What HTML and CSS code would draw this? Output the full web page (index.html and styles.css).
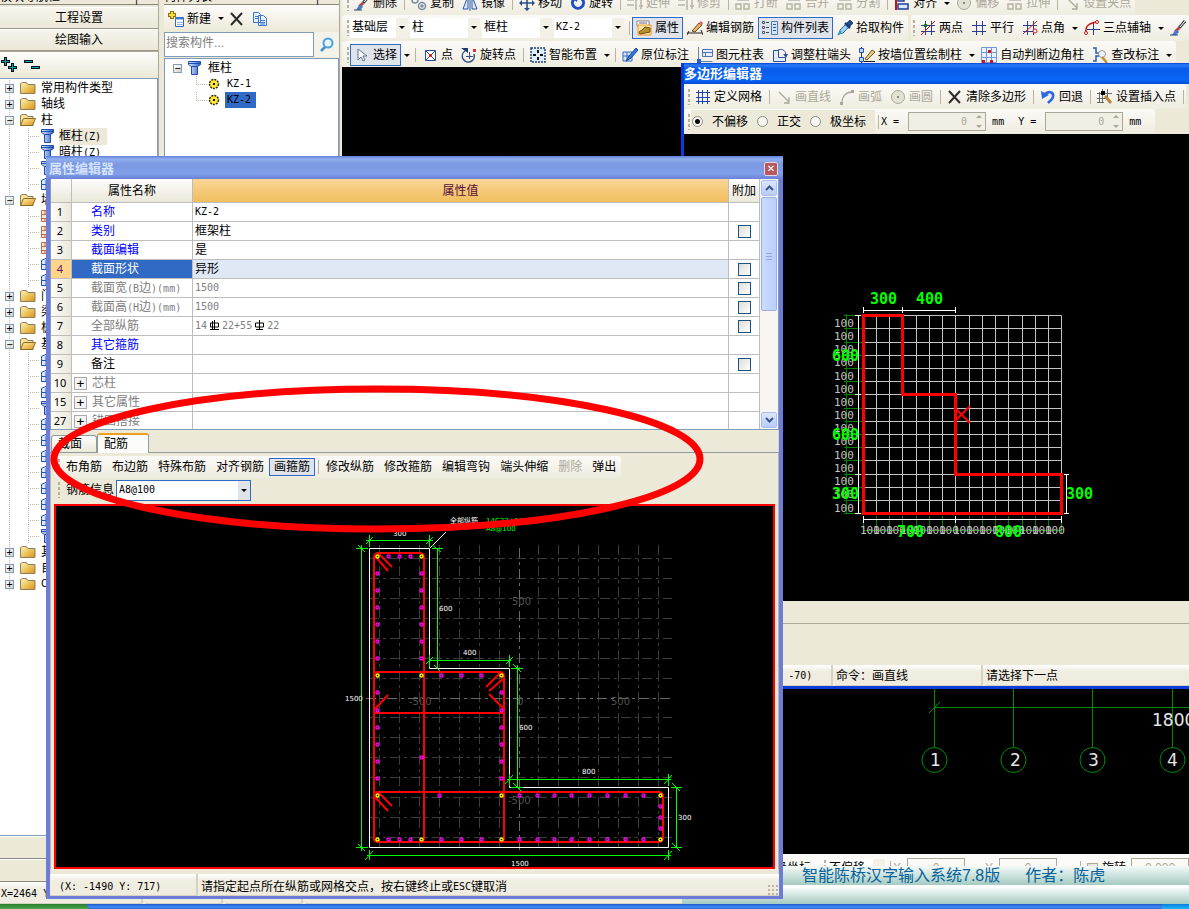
FILE: index.html
```
<!DOCTYPE html>
<html lang="zh-CN">
<head>
<meta charset="utf-8">
<title>属性编辑器</title>
<link rel="stylesheet" href="styles.css">
</head>
<body>
<svg class="defs" aria-hidden="true">
  <defs>
    <linearGradient id="gold" x1="0" y1="0" x2="1" y2="1"><stop offset="0" stop-color="#fff3b4"/><stop offset="1" stop-color="#dc9410"/></linearGradient>
    <linearGradient id="steel" x1="0" y1="0" x2="1" y2="0"><stop offset="0" stop-color="#e8f0ff"/><stop offset="1" stop-color="#2a5cc0"/></linearGradient>
    <marker id="bar" markerUnits="userSpaceOnUse" markerWidth="6" markerHeight="6" refX="2.500" refY="2.500"><circle cx="3" cy="3" r="1.500" fill="#000" stroke="#f0f" stroke-width="1.400"/></marker>
    <marker id="corner" markerUnits="userSpaceOnUse" markerWidth="6" markerHeight="6" refX="2.500" refY="2.500"><circle cx="3" cy="3" r="1.500" fill="#000" stroke="#ff0" stroke-width="1.400"/></marker>
  </defs>
  <symbol id="brush" viewBox="0 0 16 16"><path d="M15 1L9 8" stroke="#444" stroke-width="3"/><path d="M15 1L10 7" stroke="#fff"/><path d="M8 7l2 2-3 3-3-1z" fill="#c33"/><path d="M6 9l3 3-3 3H2z" fill="#4a78c8"/><path d="M0 15h8" stroke="#234a80"/></symbol>
  <symbol id="rings" viewBox="0 0 16 16"><g fill="none" stroke="#7b8ba5" stroke-width="1.5"><circle cx="4" cy="5" r="3"/><circle cx="11" cy="11" r="3.5"/><circle cx="11" cy="11" r="1"/></g></symbol>
  <symbol id="mirror" viewBox="0 0 16 16"><path d="M6 1v13H1zM10 1v13h5z" fill="#dfe9fb" stroke="#2b56a8"/><path d="M8 0v16" stroke="#2b56a8"/></symbol>
  <symbol id="move" viewBox="0 0 16 16"><path d="M8 2v12M2 8h12" stroke="#2b4f8c" stroke-width="1.6"/><path d="M8 0l3 3H5zM8 16l3-3H5zM0 8l3-3v6zM16 8l-3-3v6z" fill="#2b4f8c"/></symbol>
  <symbol id="turn" viewBox="0 0 16 16"><path d="M4 4a5.5 5.5 0 1 0 8 0" fill="none" stroke="#1d50c8" stroke-width="3"/><path d="M1 3l7-2-1 6z" fill="#1d50c8"/></symbol>
  <symbol id="dim" viewBox="0 0 16 16"><path d="M0 5h7M0 10h7M9 1v14M12 4h4M12 11h4M14 2v12" fill="none" stroke="#b9b5a4" stroke-width="1.5"/></symbol>
  <symbol id="dimbox" viewBox="0 0 16 16"><path d="M1 9h5v5H1zM9 9h5v5H9zM2 5h12" fill="none" stroke="#b9b5a4" stroke-width="1.5"/></symbol>
  <symbol id="align" viewBox="0 0 16 16"><path d="M2 0v15" stroke="#c11" stroke-width="2"/><path d="M4 2h6v4H4zM4 9h10v5H4z" fill="#dbe6ff" stroke="#1d3f98" stroke-width="1.5"/></symbol>
  <symbol id="prop" viewBox="0 0 16 16"><path d="M1 1h12v5H1z" fill="#fff" stroke="#888"/><path d="M3 3h8" stroke="#668"/><path d="M2 5h13v10H2z" fill="#ffe2a0" stroke="#ef9a2d"/><path d="M3 12l3-2 3-3 5 1v4l-5 1-5 1z" fill="#b99230" stroke="#6b4e0c"/></symbol>
  <symbol id="pencil" viewBox="0 0 16 16"><path d="M0 13h15M2 11l-2 4M14 10l2 5" stroke="#222" fill="none"/><path d="M5 11l7-8 3 2-7 7z" fill="#e2b667" stroke="#6d4c1b"/><path d="M12 3l2-2 2 2-1 2z" fill="#d66"/></symbol>
  <symbol id="list" viewBox="0 0 16 16"><path d="M.5 1.500h2v2h-2zM.5 6.500h2v2h-2zM.5 11.500h2v2h-2z" fill="#fff" stroke="#456"/><path d="M4 2.500h3M4 7.500h3M4 12.500h3" stroke="#345"/><path d="M9.500 1.500h6v13h-6z" fill="#d6e4fc" stroke="#5478b0"/><path d="M11 4.500h3M11 7.500h3M11 10.500h3" stroke="#2459b0"/></symbol>
  <symbol id="dropper" viewBox="0 0 16 16"><path d="M2 14l1-4 6-6 3 3-6 6z" fill="#9fd0f4" stroke="#2e72a8"/><path d="M8 3l5 5" stroke="#173f78" stroke-width="2.500"/><path d="M10 4l3-3 2 2-3 3z" fill="#2f78d0" stroke="#173f78" stroke-width="2"/><path d="M1 15l3-4" stroke="#2f9fd8" stroke-width="2"/></symbol>
  <symbol id="hash" viewBox="0 0 16 16"><path d="M5.500 1v14M11.500 1v14M1 5.500h14M1 11.500h14" stroke="#2c3d90"/></symbol>
  <symbol id="hashline" viewBox="0 0 16 16"><path d="M5.500 1v14M11.500 1v14M1 5.500h14M1 11.500h14" stroke="#2c3d90"/><path d="M1 15L15 1" stroke="#d01818"/><path d="M4 4h3v3H4z" fill="#197b19"/></symbol>
  <symbol id="hashangle" viewBox="0 0 16 16"><path d="M5.500 1v14M11.500 1v14M1 5.500h14M1 11.500h14" stroke="#2c3d90"/><path d="M1 14L15 1" stroke="#d01818"/><circle cx="13" cy="11" r="2" fill="#fff" stroke="#d01818"/></symbol>
  <symbol id="arc3" viewBox="0 0 16 16"><path d="M9.500 3v12M3 9.500h13" stroke="#2c3d90"/><path d="M2 13C1 6 5 3 13 2" fill="none" stroke="#d01818" stroke-width="1.5"/><circle cx="2" cy="13" r="1.500" fill="#fff" stroke="#d01818"/><circle cx="13" cy="2" r="1.500" fill="#fff" stroke="#d01818"/></symbol>
  <symbol id="cursor" viewBox="0 0 16 16"><path d="M4 2v11l3-3 2 4 2-1-2-4h4z" fill="#fff" stroke="#5a7496"/></symbol>
  <symbol id="point" viewBox="0 0 16 16"><path d="M3.500 3.500h10v10h-10z" fill="#fff" stroke="#2b4a9c"/><path d="M4 4l9 9M13 4l-9 9" stroke="#2b4a9c"/><path d="M7 7h3v3H7z" fill="#d22"/></symbol>
  <symbol id="rotpoint" viewBox="0 0 16 16"><path d="M4 4a6 6 0 1 0 9 3" fill="none" stroke="#344c86" stroke-width="1.5"/><path d="M0 1h7v5z" fill="#20386c"/><path d="M8.500 5v7M5 9.500h7" stroke="#344c86"/><path d="M12 2h3v3h-3z" fill="#d33"/></symbol>
  <symbol id="smart" viewBox="0 0 16 16"><path d="M1 1h14v14H1z" fill="#dcecfb" stroke="#23426e" stroke-width="1.5" stroke-dasharray="2 1"/><path d="M8 3v3M8 10v3M3 8h3M10 8h3" stroke="#111" stroke-width="2"/></symbol>
  <symbol id="note" viewBox="0 0 16 16"><path d="M1 5h9v9H1zM1 9h9M5 5v9" fill="#d7e4fb" stroke="#4068b8"/><path d="M4 14l3-5 7-8 2 2-7 8z" fill="#2f7be0" stroke="#174b9c"/></symbol>
  <symbol id="table" viewBox="0 0 16 16"><path d="M1.500 0v14.500h14" fill="none" stroke="#6e83a8"/><path d="M5.500 2.500h10v7h-10zM5 5.500h10M8.500 5v4" fill="#e7effd" stroke="#4d74b8"/><path d="M0 12h4v4H0z" fill="#285fc8"/></symbol>
  <symbol id="adjust" viewBox="0 0 16 16"><path d="M1.500 3.500h5v7h7v4h-12z" fill="#e4edff" stroke="#314d98"/><path d="M6 3c5-2 8 1 8 6" fill="none" stroke="#314d98"/><path d="M11 7h5l-2 4z" fill="#314d98"/></symbol>
  <symbol id="wallpos" viewBox="0 0 16 16"><path d="M2.500 0v16" stroke="#333"/><path d="M.5 1.500h4v4h-4zM.5 10.500h4v4h-4z" fill="#bcd5ff" stroke="#2355b8"/><path d="M5 14.500h11" stroke="#222"/><path d="M6 12l7-9 3 2-8 8z" fill="#e7cd83" stroke="#735521"/></symbol>
  <symbol id="autocol" viewBox="0 0 16 16"><path d="M.5.5h15v15H.5zM1 5.500h14M1 10.500h14M5.500 1v14M10.500 1v14" fill="#e9f2ff" stroke="#6f99d8"/><path d="M7 3h3v3H7zM1 13h3v3H1zM9 13h3v3H9z" fill="#d11"/></symbol>
  <symbol id="check" viewBox="0 0 16 16"><path d="M1 1h3v5h3v3H4v5H1" fill="none" stroke="#2660b8" stroke-width="1.5"/><circle cx="10" cy="7" r="3.5" fill="#eaf3ff" stroke="#999"/><path d="M10 10l5 6" stroke="#c19138" stroke-width="2.5"/></symbol>
  <symbol id="grid" viewBox="0 0 16 16"><path d="M3.500 1v14M7.500 1v14M12.500 1v14M1 3.500h14M1 8.500h14M1 12.500h14" stroke="#2347a0"/></symbol>
  <symbol id="line" viewBox="0 0 16 16"><path d="M3 3l10 10M13 8v6H8" fill="none" stroke="#aca899" stroke-width="1.3"/></symbol>
  <symbol id="arc" viewBox="0 0 16 16"><path d="M3 14C3 7 7 3 13 3" fill="none" stroke="#aca899" stroke-width="1.3"/><path d="M12 1h3v3h-3zM1 13h3v3H1z" fill="#aca899"/></symbol>
  <symbol id="circle" viewBox="0 0 16 16"><circle cx="8" cy="8" r="6.5" fill="#e3e0d4" stroke="#aca899"/><path d="M7 7h2v2H7z" fill="#8c897c"/></symbol>
  <symbol id="cross" viewBox="0 0 16 16"><path d="M2 2l11 12M13 2L2 14" stroke="#2c2c2c" stroke-width="2"/></symbol>
  <symbol id="undo" viewBox="0 0 16 16"><path d="M5 5c5-4 9-1 8 3-1 3-3 4-5 6" fill="none" stroke="#2f6be0" stroke-width="2.6"/><path d="M1 2l1 8 7-4z" fill="#2f6be0"/></symbol>
  <symbol id="insert" viewBox="0 0 16 16"><path d="M5.500 0v14M10.500 0v8M0 4.500h15M0 9.500h9M0 13.500h7M2.500 3v11" stroke="#666"/><path d="M4 2h4v4H4z" fill="#000"/><path d="M8 7l6 7" stroke="#b9873b" stroke-width="3"/></symbol>
  <symbol id="new" viewBox="0 0 16 16"><path d="M4 0v8M0 4h8" stroke="#8c7208" stroke-width="4"/><path d="M4 1v6M1 4h6" stroke="#fadb3d" stroke-width="2"/><path d="M7.500 6.500h8v9h-8z" fill="#fff" stroke="#3567b4"/><path d="M7 7.500h9" stroke="#3f7de0" stroke-width="2"/><path d="M9 11.500h6M9 13.500h6" stroke="#9ab7e8"/></symbol>
  <symbol id="pages" viewBox="0 0 16 16"><path d="M1.500 1.500h5l2 2v8h-7zM6.500 4.500h5l3 3v7h-8z" fill="#e6f1ff" stroke="#3d78c8"/><path d="M3 5.500h3M3 7.500h3M8 9.500h5M8 11.500h5M8 13h5" stroke="#3d78c8"/></symbol>
  <symbol id="search" viewBox="0 0 16 16"><circle cx="9" cy="6" r="4.500" fill="#eaf7ff" stroke="#4aa3e0" stroke-width="2"/><path d="M6 10l-4 4" stroke="#3b8fd0" stroke-width="2.500"/></symbol>
  <symbol id="plusplus" viewBox="0 0 16 16"><path d="M4.500 0v9M0 4.500h9M11.500 6v9M7 10.500h9" stroke="#012" stroke-width="3"/><path d="M4.500 1v7M1 4.500h7M11.500 7v7M8 10.500h7" stroke="#12a19a"/></symbol>
  <symbol id="minusminus" viewBox="0 0 16 16"><path d="M0 4.500h9M7 10.500h9" stroke="#012" stroke-width="3"/><path d="M1 4.500h7M8 10.500h7" stroke="#12a19a"/></symbol>
  <symbol id="folder" viewBox="0 0 16 16"><path d="M.5 13.500v-10l2-1h4l1 2h7.500v9z" fill="url(#gold)" stroke="#8d7f5e"/></symbol>
  <symbol id="open" viewBox="0 0 16 16"><path d="M.5 13.500v-10l2-1h4l1 2h5.500v9z" fill="#f7e49b" stroke="#8d7f5e"/><path d="M.5 13.500l3-7h12l-3 7z" fill="url(#gold)" stroke="#8d6a22"/></symbol>
  <symbol id="column" viewBox="0 0 16 16"><path d="M1.500 1.500h12v3l-3 2v8h-6v-8l-3-2z" fill="url(#steel)" stroke="#1c4db0"/><path d="M1.500 3.500h12M4.500 6.500h6" stroke="#1c4db0"/></symbol>
  <symbol id="gear" viewBox="0 0 16 16"><circle cx="8" cy="8" r="4.500" fill="#ffe935" stroke="#332d00" stroke-width="1.500" stroke-dasharray="2 1"/><path d="M7 7h2v2H7z" fill="#111"/></symbol>
  <symbol id="element" viewBox="0 0 16 16"><path d="M1.500 4.500v9h12v-9l-6-3zM1 8.500h13M6 4v10M10 4v10" fill="#dbe7ff" stroke="#1f55ac"/></symbol>
  <symbol id="brick" viewBox="0 0 16 16"><path d="M1.500 2.500h12v11h-12zM1 6.500h13M1 10.500h13M5 2v4M9 6v4M5 10v4" fill="#ffe9df" stroke="#c4673a"/></symbol>
</svg>

<div class="desktop">
  <div class="main">
    <div class="left">
      <section class="panel nav">
        <h2 class="panel-title"><span>模块导航栏</span><span class="pin">┬ ✕</span></h2>
        <button class="nav-button">工程设置</button>
        <button class="nav-button">绘图输入</button>
        <div class="nav-tools">
          <button class="bare" aria-label="全部展开"><svg class="icon"><use href="#plusplus"/></svg></button>
          <button class="bare" aria-label="全部折叠"><svg class="icon"><use href="#minusminus"/></svg></button>
        </div>
        <ul class="tree nav-tree">
          <li><i class="box">+</i><svg class="icon"><use href="#folder"/></svg>常用构件类型</li>
          <li><i class="box">+</i><svg class="icon"><use href="#folder"/></svg>轴线</li>
          <li><i class="box">−</i><svg class="icon"><use href="#open"/></svg>柱</li>
          <li class="leaf"><svg class="icon"><use href="#column"/></svg><span class="tag">框柱<span class="m">(Z)</span></span></li>
          <li class="leaf"><svg class="icon"><use href="#column"/></svg><span>暗柱<span class="m">(Z)</span></span></li>
          <li class="leaf"><svg class="icon"><use href="#column"/></svg></li>
          <li class="leaf"><svg class="icon"><use href="#element"/></svg></li>
          <li><i class="box">−</i><svg class="icon"><use href="#open"/></svg>墙</li>
          <li class="leaf"><svg class="icon"><use href="#brick"/></svg></li>
          <li class="leaf"><svg class="icon"><use href="#brick"/></svg></li>
          <li class="leaf"><svg class="icon"><use href="#brick"/></svg></li>
          <li class="leaf"><svg class="icon"><use href="#element"/></svg></li>
          <li class="leaf"><svg class="icon"><use href="#element"/></svg></li>
          <li><i class="box">+</i><svg class="icon"><use href="#folder"/></svg>门窗洞</li>
          <li><i class="box">+</i><svg class="icon"><use href="#folder"/></svg>梁</li>
          <li><i class="box">+</i><svg class="icon"><use href="#folder"/></svg>板</li>
          <li><i class="box">−</i><svg class="icon"><use href="#open"/></svg>基础</li>
          <li class="leaf"><svg class="icon"><use href="#element"/></svg></li>
          <li class="leaf"><svg class="icon"><use href="#element"/></svg></li>
          <li class="leaf"><svg class="icon"><use href="#element"/></svg></li>
          <li class="leaf"><svg class="icon"><use href="#column"/></svg></li>
          <li class="leaf"><svg class="icon"><use href="#element"/></svg></li>
          <li class="leaf"><svg class="icon"><use href="#element"/></svg></li>
          <li class="leaf"><svg class="icon"><use href="#element"/></svg></li>
          <li class="leaf"><svg class="icon"><use href="#element"/></svg></li>
          <li class="leaf"><svg class="icon"><use href="#element"/></svg></li>
          <li class="leaf"><svg class="icon"><use href="#element"/></svg></li>
          <li class="leaf"><svg class="icon"><use href="#element"/></svg></li>
          <li class="leaf"><svg class="icon"><use href="#column"/></svg></li>
          <li><i class="box">+</i><svg class="icon"><use href="#folder"/></svg>其它</li>
          <li><i class="box">+</i><svg class="icon"><use href="#folder"/></svg>自定义</li>
          <li><i class="box">+</i><svg class="icon"><use href="#folder"/></svg><span class="m">CAD</span>识别</li>
        </ul>
      </section>
      <div class="strip"></div>
      <div class="strip"></div>
    </div>

    <section class="panel parts">
      <h2 class="panel-title"><span>构件列表</span><span class="pin">┬ ✕</span></h2>
      <div class="part-tools">
        <button class="tool"><svg class="icon"><use href="#new"/></svg>新建</button><i class="arrow"></i>
        <button class="bare" aria-label="删除构件"><svg class="icon"><use href="#cross"/></svg></button>
        <button class="bare" aria-label="复制构件"><svg class="icon"><use href="#pages"/></svg></button>
      </div>
      <div class="search">
        <input type="text" placeholder="搜索构件..." aria-label="搜索构件">
        <button class="bare" aria-label="搜索"><svg class="icon"><use href="#search"/></svg></button>
      </div>
      <ul class="tree part-tree">
        <li><i class="box">−</i><svg class="icon"><use href="#column"/></svg>框柱</li>
        <li class="leaf"><svg class="icon"><use href="#gear"/></svg><span class="m">KZ-1</span></li>
        <li class="leaf"><svg class="icon"><use href="#gear"/></svg><span class="m picked">KZ-2</span></li>
      </ul>
    </section>

    <div class="work">
      <div class="bars">
        <div class="bar first">
          <i class="grip"></i>
          <button class="tool"><svg class="icon"><use href="#brush"/></svg>删除</button><i class="sep"></i>
          <button class="tool"><svg class="icon"><use href="#rings"/></svg>复制</button>
          <button class="tool"><svg class="icon"><use href="#mirror"/></svg>镜像</button><i class="sep"></i>
          <button class="tool"><svg class="icon"><use href="#move"/></svg>移动</button>
          <button class="tool"><svg class="icon"><use href="#turn"/></svg>旋转</button><i class="sep"></i>
          <button class="tool" disabled><svg class="icon"><use href="#dim"/></svg>延伸</button>
          <button class="tool" disabled><svg class="icon"><use href="#dim"/></svg>修剪</button><i class="sep"></i>
          <button class="tool" disabled><svg class="icon"><use href="#dimbox"/></svg>打断</button>
          <button class="tool" disabled><svg class="icon"><use href="#dimbox"/></svg>合并</button>
          <button class="tool" disabled><svg class="icon"><use href="#dimbox"/></svg>分割</button><i class="sep"></i>
          <button class="tool"><svg class="icon"><use href="#align"/></svg>对齐</button><i class="arrow"></i>
          <button class="tool" disabled><svg class="icon"><use href="#circle"/></svg>偏移</button>
          <button class="tool" disabled><svg class="icon"><use href="#dimbox"/></svg>拉伸</button><i class="sep"></i>
          <button class="tool" disabled><svg class="icon"><use href="#line"/></svg>设置夹点</button>
        </div>
        <div class="bar-row">
          <div class="bar">
            <i class="grip"></i>
            <span class="combo floor"><select aria-label="楼层"><option>基础层</option></select></span>
            <span class="combo"><select aria-label="构件类别"><option>柱</option></select></span>
            <span class="combo"><select aria-label="构件类型"><option>框柱</option></select></span>
            <span class="combo"><select class="m" aria-label="构件名称"><option>KZ-2</option></select></span>
            <i class="sep"></i>
            <button class="tool on"><svg class="icon"><use href="#prop"/></svg>属性</button>
            <button class="tool"><svg class="icon"><use href="#pencil"/></svg>编辑钢筋</button>
            <button class="tool on"><svg class="icon"><use href="#list"/></svg>构件列表</button>
            <button class="tool"><svg class="icon"><use href="#dropper"/></svg>拾取构件</button>
          </div>
          <div class="bar axis">
            <i class="grip"></i>
            <button class="tool"><svg class="icon"><use href="#hashline"/></svg>两点</button>
            <button class="tool"><svg class="icon"><use href="#hash"/></svg>平行</button>
            <button class="tool"><svg class="icon"><use href="#hashangle"/></svg>点角</button><i class="arrow"></i>
            <button class="tool"><svg class="icon"><use href="#arc3"/></svg>三点辅轴</button><i class="arrow"></i>
            <button class="tool" aria-label="删除辅轴"><svg class="icon"><use href="#brush"/></svg></button>
          </div>
        </div>
        <div class="bar third">
          <i class="grip"></i>
          <button class="tool on"><svg class="icon"><use href="#cursor"/></svg>选择</button><i class="arrow"></i><i class="sep"></i>
          <button class="tool"><svg class="icon"><use href="#point"/></svg>点</button>
          <button class="tool"><svg class="icon"><use href="#rotpoint"/></svg>旋转点</button><i class="sep"></i>
          <button class="tool"><svg class="icon"><use href="#smart"/></svg>智能布置</button><i class="arrow"></i><i class="sep"></i>
          <button class="tool"><svg class="icon"><use href="#note"/></svg>原位标注</button>
          <button class="tool"><svg class="icon"><use href="#table"/></svg>图元柱表</button>
          <button class="tool"><svg class="icon"><use href="#adjust"/></svg>调整柱端头</button>
          <button class="tool"><svg class="icon"><use href="#wallpos"/></svg>按墙位置绘制柱</button><i class="arrow"></i>
          <button class="tool"><svg class="icon"><use href="#autocol"/></svg>自动判断边角柱</button>
          <button class="tool"><svg class="icon"><use href="#check"/></svg>查改标注</button><i class="arrow"></i>
        </div>
      </div>
      <div class="canvas">
        <svg class="drawing" viewBox="342 67 847 787" width="847" height="787" role="img" aria-label="轴网">
          <g fill="none" stroke="#008c00">
            <path d="M934.500 680V747M1013.500 680V747M1092.500 680V747M1172.500 680V747M934.500 707.500H1189M929 713L940 702"/>
            <circle cx="934.500" cy="760" r="12.500"/><circle cx="1013.500" cy="760" r="12.500"/><circle cx="1092.500" cy="760" r="12.500"/><circle cx="1172.500" cy="760" r="12.500"/>
          </g>
          <g class="axis-text"><text x="930" y="766">1</text><text x="1010" y="766">2</text><text x="1088" y="766">3</text><text x="1167" y="766">4</text><text x="1152" y="726">18000</text></g>
        </svg>
      </div>
      <div class="snap">
        <span class="snap-mode">极坐标</span><i class="grip"></i>
        <span class="combo snap-combo"><select aria-label="偏移方式"><option>不偏移</option></select></span><i class="sep"></i>
        <label class="field">X<input type="text" value="0" disabled></label>
        <label class="field">Y<input type="text" value="0" disabled></label><i class="sep"></i>
        <label class="turn"><input type="checkbox" class="tick" disabled>旋转</label>
        <input class="angle" type="text" value="0.000" disabled aria-label="角度">
      </div>
    </div>
  </div>
  <footer class="status base"><span class="m cell">X=2464 Y=-3140</span><span class="cell"></span><span class="cell"></span><span class="cell rest"></span></footer>
  <div class="taskbar"><button class="start" aria-label="开始"></button><span class="tray"></span></div>

  <div class="ime"><p>智能陈桥汉字输入系统7.8版</p><p>作者：陈虎</p></div>

  <section class="window poly">
    <h1 class="caption">多边形编辑器</h1>
    <div class="bar">
      <i class="grip"></i>
      <button class="tool"><svg class="icon"><use href="#grid"/></svg>定义网格</button><i class="sep"></i>
      <button class="tool" disabled><svg class="icon"><use href="#line"/></svg>画直线</button>
      <button class="tool" disabled><svg class="icon"><use href="#arc"/></svg>画弧</button>
      <button class="tool" disabled><svg class="icon"><use href="#circle"/></svg>画圆</button><i class="sep"></i>
      <button class="tool"><svg class="icon"><use href="#cross"/></svg>清除多边形</button><i class="sep"></i>
      <button class="tool"><svg class="icon"><use href="#undo"/></svg>回退</button><i class="sep"></i>
      <button class="tool"><svg class="icon"><use href="#insert"/></svg>设置插入点</button><i class="sep"></i>
    </div>
    <div class="bar">
      <i class="grip"></i>
      <div class="radios">
        <label><input type="radio" name="mode" checked>不偏移</label>
        <label><input type="radio" name="mode">正交</label>
        <label><input type="radio" name="mode">极坐标</label>
      </div>
      <i class="sep"></i>
      <label class="spin m">X =<span class="num"><input type="text" value="0" disabled></span>mm</label>
      <label class="spin m">Y =<span class="num"><input type="text" value="0" disabled></span>mm</label>
    </div>
    <div class="view">
      <svg class="drawing" viewBox="684 134 505 467" width="505" height="467" role="img" aria-label="多边形截面">
        <path fill="none" stroke="#c4c4c4" d="M863.500 315.500H1061.500V513.500H863.500zM876.500 315V513M889.500 315V513M902.500 315V513M916.500 315V513M929.500 315V513M942.500 315V513M955.500 315V513M969.500 315V513M982.500 315V513M995.500 315V513M1008.500 315V513M1022.500 315V513M1035.500 315V513M1048.500 315V513M863 328.500H1061M863 342.500H1061M863 355.500H1061M863 368.500H1061M863 381.500H1061M863 394.500H1061M863 408.500H1061M863 421.500H1061M863 434.500H1061M863 447.500H1061M863 460.500H1061M863 474.500H1061M863 487.500H1061M863 500.500H1061"/>
        <path fill="none" stroke="#008000" d="M846.500 314V514M844 315.500H862M844 328.500H862M844 342.500H862M844 355.500H862M844 368.500H862M844 381.500H862M844 394.500H862M844 408.500H862M844 421.500H862M844 434.500H862M844 447.500H862M844 460.500H862M844 474.500H862M844 487.500H862M844 500.500H862M844 513.500H862M863 530.500H1062M863.500 516V533M876.500 516V533M889.500 516V533M902.500 516V533M916.500 516V533M929.500 516V533M942.500 516V533M955.500 516V533M969.500 516V533M982.500 516V533M995.500 516V533M1008.500 516V533M1022.500 516V533M1035.500 516V533M1048.500 516V533M1061.500 516V533"/>
        <path fill="none" stroke="#fff" d="M863 310.500H956M863.500 307V313M902.500 307V313M955.500 307V313M858.500 315V514M855 315.500H861M855 394.500H861M855 474.500H861M855 513.500H861M863 519.500H1062M863.500 516V523M955.500 516V523M1061.500 516V523M1066.500 474V514M1064 474.500H1069M1064 513.500H1069"/>
        <g class="hundred"><text x="834" y="327">100</text><text x="834" y="340">100</text><text x="834" y="353">100</text><text x="834" y="366">100</text><text x="834" y="380">100</text><text x="834" y="393">100</text><text x="834" y="406">100</text><text x="834" y="419">100</text><text x="834" y="432">100</text><text x="834" y="445">100</text><text x="834" y="459">100</text><text x="834" y="472">100</text><text x="834" y="485">100</text><text x="834" y="498">100</text><text x="834" y="512">100</text>
        <text x="860" y="534">100</text><text x="873" y="534">100</text><text x="886" y="534">100</text><text x="900" y="534">100</text><text x="913" y="534">100</text><text x="926" y="534">100</text><text x="939" y="534">100</text><text x="953" y="534">100</text><text x="966" y="534">100</text><text x="979" y="534">100</text><text x="992" y="534">100</text><text x="1005" y="534">100</text><text x="1019" y="534">100</text><text x="1032" y="534">100</text><text x="1045" y="534">100</text></g>
        <path fill="none" stroke="#f00" stroke-width="3" d="M863.500 315.500H902.500V394.500H955.500V474.500H1061.500V513.500H863.500z"/>
        <path fill="none" stroke="#f00" stroke-width="2" d="M954 407L970 423M970 406L954 422"/>
        <g class="dimension"><text x="870" y="304">300</text><text x="916" y="304">400</text><text x="832" y="361">600</text><text x="832" y="440">600</text><text x="832" y="499">300</text><text x="1066" y="499">300</text><text x="897" y="537">700</text><text x="995" y="537">800</text></g>
      </svg>
    </div>
    <div class="lower"></div>
    <footer class="status"><span class="cell coord m">(X: 7, Y: -70)</span><span class="cell command">命令：画直线</span><span class="cell rest">请选择下一点</span></footer>
  </section>

  <section class="window props">
    <header class="caption"><h1>属性编辑器</h1><button class="close" aria-label="关闭">✕</button></header>
    <div class="sheet">
      <div class="table-box">
      <table>
        <colgroup><col class="c-num"><col class="c-name"><col><col class="c-add"></colgroup>
        <thead><tr><th></th><th>属性名称</th><th class="hot">属性值</th><th>附加</th></tr></thead>
        <tbody>
          <tr><th>1</th><td class="name key">名称</td><td class="m">KZ-2</td><td></td></tr>
          <tr><th>2</th><td class="name key">类别</td><td>框架柱</td><td class="add"><input class="tick" type="checkbox" aria-label="附加 类别"></td></tr>
          <tr><th>3</th><td class="name key">截面编辑</td><td>是</td><td></td></tr>
          <tr class="current"><th>4</th><td class="name">截面形状</td><td>异形</td><td class="add"><input class="tick" type="checkbox" aria-label="附加 截面形状"></td></tr>
          <tr class="dim"><th>5</th><td class="name">截面宽<span class="m">(B</span>边<span class="m">)(mm)</span></td><td class="m">1500</td><td class="add"><input class="tick" type="checkbox" aria-label="附加 截面宽"></td></tr>
          <tr class="dim"><th>6</th><td class="name">截面高<span class="m">(H</span>边<span class="m">)(mm)</span></td><td class="m">1500</td><td class="add"><input class="tick" type="checkbox" aria-label="附加 截面高"></td></tr>
          <tr class="dim"><th>7</th><td class="name">全部纵筋</td><td class="m">14<svg class="rebar" viewBox="0 0 15 10"><path d="M7.500 0v10M3 9.500h9M5.500 1v8M3.500 3h8v4h-8z" fill="none" stroke="#000"/></svg>22+55<svg class="rebar" viewBox="0 0 15 10"><path d="M7.500 0v10M4 9.500h7M3.500 3h8v4h-8z" fill="none" stroke="#000"/></svg>22</td><td class="add"><input class="tick" type="checkbox" aria-label="附加 全部纵筋"></td></tr>
          <tr><th>8</th><td class="name key">其它箍筋</td><td></td><td></td></tr>
          <tr><th>9</th><td class="name">备注</td><td></td><td class="add"><input class="tick" type="checkbox" aria-label="附加 备注"></td></tr>
          <tr class="dim"><th>10</th><td class="group"><button class="plus" aria-label="展开">+</button>芯柱</td><td></td><td></td></tr>
          <tr class="dim"><th>15</th><td class="group"><button class="plus" aria-label="展开">+</button>其它属性</td><td></td><td></td></tr>
          <tr class="dim"><th>27</th><td class="group"><button class="plus" aria-label="展开">+</button>锚固搭接</td><td></td><td></td></tr>
        </tbody>
      </table>
      </div>
      <div class="scroll"><button aria-label="向上"><svg viewBox="0 0 9 6"><path d="M1 5l3.500-3.500L8 5" fill="none" stroke="#3d5589" stroke-width="2"/></svg></button><span class="thumb"></span><button aria-label="向下"><svg viewBox="0 0 9 6"><path d="M1 1l3.500 3.500L8 1" fill="none" stroke="#3d5589" stroke-width="2"/></svg></button></div>
    </div>
    <div class="tabs"><button class="tab">截面</button><button class="tab active">配筋</button></div>
    <div class="pane">
      <div class="bar rebars">
        <i class="grip"></i>
        <button class="tool">布角筋</button><button class="tool">布边筋</button><button class="tool">特殊布筋</button><button class="tool">对齐钢筋</button><button class="tool on">画箍筋</button><i class="sep"></i><button class="tool">修改纵筋</button><button class="tool">修改箍筋</button><button class="tool">编辑弯钩</button><button class="tool">端头伸缩</button><button class="tool" disabled>删除</button><button class="tool">弹出</button>
      </div>
      <div class="info">
        <i class="grip"></i><label for="info">钢筋信息</label>
        <span class="combo steel"><select class="m" id="info"><option>A8@100</option></select></span>
      </div>
      <div class="view section">
        <svg class="drawing" viewBox="56 506 717 361" width="717" height="361" role="img" aria-label="配筋截面">
          <path fill="none" stroke="#3c3c3c" stroke-dasharray="10 4 3 4" d="M379.500 545V847M399.500 545V847M419.500 545V847M439.500 545V847M459.500 545V847M479.500 545V847M499.500 545V847M538.500 545V847M558.500 545V847M578.500 545V847M598.500 545V847M618.500 545V847M638.500 545V847M658.500 545V847M369 558.500H672M369 578.500H672M369 598.500H672M369 618.500H672M369 638.500H672M369 658.500H672M369 678.500H672M369 717.500H672M369 737.500H672M369 757.500H672M369 777.500H672M369 797.500H672M369 817.500H672M369 837.500H672"/>
          <path fill="none" stroke="#6a6a6a" stroke-dasharray="10 4 3 4" d="M519.500 548V850M366 698.500H670"/>
          <g class="faint"><text x="512" y="605">500</text><text x="409" y="705">-500</text><text x="517" y="705">0</text><text x="611" y="705">500</text><text x="508" y="804">-500</text></g>
          <path fill="none" stroke="#fff" d="M369.500 548.500H429.500V668.500H509.500V787.500H668.500V847.500H369.500zM430 548L446 532"/>
          <path fill="none" stroke="#0f0" d="M366 540.500H433M369.500 535V547M429.500 535V547M366 544L373 537M426 544L433 537M361.500 545V851M356 548.500H368M356 847.500H368M358 545L365 552M358 844L365 851M437.500 548V669M432 548.500H443M432 545L441 552M434 665L441 672M429 660.500H511M429.500 655V667M509.500 655V667M426 664L433 657M506 664L513 657M517.500 665V788M511 668.500H523M511 787.500H523M513 664L521 672M513 783L521 791M507 779.500H671M509.500 774V786M668.500 774V786M505 784L513 775M664 784L672 775M676.500 787V847M671 787.500H682M671 847.500H682M672 783L680 791M672 843L680 851M367 855.500H671M369.500 850V860M668.500 850V860M365 860L373 851M664 860L672 851"/>
          <g fill="none" stroke="#f00" stroke-width="2"><rect x="374" y="553" width="50" height="289" rx="4"/><rect x="374" y="672" width="130" height="170" rx="4"/><path d="M374 713H504"/><rect x="374" y="792" width="289" height="50" rx="4"/>
          <path d="M375 556L388 571M379 554L392 567M500 673L486 687M503 679L489 691M489 694L503 708M375 709L388 695M375 797L388 811M379 793L392 806"/></g>
          <g fill="none" marker-start="url(#bar)" marker-mid="url(#bar)" marker-end="url(#bar)">
            <path d="M388 556H399H410"/><path d="M377 573V590V607V624V641V658"/><path d="M421 573V590V607V624V641V658"/><path d="M441 675H461H481"/>
            <path d="M377 692V710V727V744V761V778"/><path d="M501 692V710V727V744V761V778"/><path d="M421 757L439 795"/><path d="M519 795H537H554H571H589H607H625H643"/><path d="M660 806V817V828"/>
            <path d="M388 839H399H410H441H461H481H519H537H554H571H589H607H625H643"/>
          </g>
          <path fill="none" marker-start="url(#corner)" marker-mid="url(#corner)" marker-end="url(#corner)" d="M377 556H421V675H377V795V839H421H501V795V675M660 795V839"/>
          <g class="tiny"><text x="393" y="536">300</text><text x="439" y="611">600</text><text x="463" y="655">400</text><text x="519" y="730">600</text><text x="582" y="774">800</text><text x="678" y="820">300</text><text x="345" y="701">1500</text><text x="511" y="866">1500</text></g>
          <text class="tiny" x="450" y="523">全部纵筋</text><text class="tiny lime" x="486" y="523">14C22+55B22</text><text class="tiny lime" x="486" y="531">A8@100</text>
        </svg>
      </div>
    </div>
    <footer class="status"><span class="cell pos m">(X: -1490 Y: 717)</span><span class="cell rest">请指定起点所在纵筋或网格交点，按右键终止或<span class="m">ESC</span>键取消</span><i class="size"></i></footer>
    <svg class="mark" viewBox="0 0 656 152" aria-hidden="true"><ellipse cx="328" cy="76" rx="323" ry="70" fill="none" stroke="#f00" stroke-width="7"/></svg>
  </section>
</div>
</body>
</html>
```
FILE: styles.css
```
:root {
  --face: #ece9d8;
  --line: #aca899;
  --light: #fbfaf6;
  --edge: #7f9db9;
  --blue: #316ac5;
}
* { box-sizing: border-box; }
body {
  margin: 0;
  font: 12px/16px "Liberation Sans", "Noto Sans CJK SC", sans-serif;
  color: #000;
  background: var(--face);
  overflow: hidden;
}
button, input, select { font: inherit; color: inherit; margin: 0; }
button { padding: 0; }
h1, h2, p, ul { margin: 0; padding: 0; font-weight: normal; }
.m { font-family: "DejaVu Sans Mono", "Noto Sans CJK SC", monospace; font-size: 10px; }
.defs { position: absolute; width: 0; height: 0; }
.icon { width: 16px; height: 16px; flex: none; display: block; }
.drawing { display: block; flex: none; }

.desktop { position: relative; height: 100vh; display: flex; flex-direction: column; overflow: hidden; }
.main { flex: 1; min-height: 0; display: flex; }
.left { width: 159px; flex: none; display: flex; flex-direction: column; margin-right: 5px; }
.panel { display: flex; flex-direction: column; min-height: 0; }
.panel-title {
  height: 16px; margin-top: -11px; flex: none; display: flex; justify-content: space-between;
  border-bottom: 1px solid #8a887c; font-size: 12px; line-height: 16px; padding-right: 4px;
}
.nav { flex: 1; border-right: 1px solid var(--line); }
.nav-button {
  height: 22px; flex: none; border: 0; border-bottom: 1px solid #9d9a8c; border-top: 1px solid #fff;
  background: linear-gradient(#f6f4ec, #ebe8d8); text-align: center;
}
.panel-title + .nav-button { margin-top: 2px; }
.nav-tools { height: 27px; flex: none; display: flex; align-items: center; gap: 7px; border-top: 1px solid var(--line); background: linear-gradient(#fdfcfa, #ece9d8); padding-left: 1px; }
.bare { border: 0; background: none; display: flex; }
.tree { list-style: none; background: #fff; border: 1px solid var(--edge); overflow: hidden; white-space: nowrap; }
.nav-tree { flex: 1; border-left: 0; padding-top: 1px; }
.tree li {
  height: 16px; display: flex; align-items: center; gap: 5px; padding-left: 5px;
  background: repeating-linear-gradient(#b9b5a8 0 1px, transparent 1px 2px) 9px 0 / 1px 100% no-repeat;
}
.tree .box {
  width: 9px; height: 9px; flex: none; border: 1px solid var(--edge); background: linear-gradient(135deg, #fff, #d6d2c2);
  font: 10px/7px "DejaVu Sans Mono", monospace; text-align: center; margin-right: 1px;
}
.nav-tree .leaf {
  padding-left: 40px; gap: 3px;
  background:
    repeating-linear-gradient(#b9b5a8 0 1px, transparent 1px 2px) 9px 0 / 1px 100% no-repeat,
    repeating-linear-gradient(#b9b5a8 0 1px, transparent 1px 2px) 28px 0 / 1px 100% no-repeat,
    repeating-linear-gradient(90deg, #b9b5a8 0 1px, transparent 1px 2px) 28px 8px / 12px 1px no-repeat;
}
.tag { background: var(--face); padding-right: 6px; }
.strip { height: 23px; flex: none; border-bottom: 1px solid #8a887c; border-top: 1px solid #fff; }

.parts { width: 176px; flex: none; border-right: 1px solid var(--line); margin-right: 2px; }
.part-tools { height: 27px; flex: none; display: flex; align-items: center; background: linear-gradient(#fdfcfa, #ece9d8); }
.part-tools .bare { margin: 0 4px 0 3px; }
.search { height: 25px; flex: none; display: flex; margin-bottom: 1px; }
.search input { flex: 1; min-width: 0; border: 1px solid var(--edge); padding: 0 1px 4px; background: #fff; }
.search input::placeholder { color: #808080; }
.search .bare { width: 25px; align-items: center; justify-content: center; background: #f4f3ea; }
.part-tree { flex: 1; }
.part-tree li { padding-left: 8px; background: none; }
.part-tree li:first-child { margin-top: 1px; }
.part-tree .box { margin-right: 0; }
.part-tree .leaf {
  padding-left: 41px;
  background:
    repeating-linear-gradient(#b9b5a8 0 1px, transparent 1px 2px) 31px 0 / 1px 9px no-repeat,
    repeating-linear-gradient(90deg, #b9b5a8 0 1px, transparent 1px 2px) 31px 8px / 12px 1px no-repeat;
}
.picked { background: var(--blue); padding: 0 5px 0 2px; margin-left: -2px; }

.work { flex: 1; min-width: 0; display: flex; flex-direction: column; }
.bars { flex: none; margin-top: -9px; }
.bar-row { display: flex; }
.bar {
  height: 26px; flex: none; display: flex; align-items: center; white-space: nowrap; overflow: hidden;
  background: linear-gradient(#fbfaf7, #efecdf); width: max-content; max-width: 100%; border-radius: 3px; padding-left: 4px;
}
.bar.first { height: 24px; }
.bar-row .axis { flex: 1; min-width: 0; padding-left: 1px; margin-left: 3px; }
.bar.third { padding-right: 2px; padding-top: 2px; }
.grip { width: 4px; height: 16px; flex: none; background: repeating-linear-gradient(#b5b19f 0 3px, transparent 3px 5px) 1px 0 / 2px 100% no-repeat; }
.sep { width: 6px; height: 14px; flex: none; background: linear-gradient(#b8b4a3, #b8b4a3) 3px 0 / 1px 100% no-repeat; }
.tool {
  height: 22px; flex: none; display: flex; align-items: center; gap: 3px; padding: 0 3px;
  border: 1px solid transparent; background: none;
}
.tool:disabled { color: #aca899; }
.tool.on { border-color: var(--blue); background: #dfe3ea; }
.arrow { width: 11px; height: 3px; flex: none; display: flex; justify-content: center; }
.arrow::after, .combo::after { content: ""; border: 3px solid transparent; border-top-color: #000; border-bottom: 0; }
.combo { position: relative; display: flex; width: 70px; flex: none; height: 18px; margin-right: 2px; background: #fff; }
.combo::after { position: absolute; right: 3px; top: 8px; pointer-events: none; }
.combo select { flex: 1; min-width: 0; appearance: none; border: 0; padding: 0 2px; background: linear-gradient(#f3f1e7, #f3f1e7) right / 12px 100% no-repeat; }
.combo.floor { width: 58px; }
.bar-row .combo { height: 20px; }
.bar-row .combo select { padding-bottom: 2px; }
.canvas { flex: 1; min-height: 0; background: #000; overflow: hidden; display: flex; }
.axis-text { font: 17px "DejaVu Sans", sans-serif; fill: #e6e6e6; }
.snap { height: 28px; flex: none; display: flex; align-items: center; background: var(--light); padding-left: 433px; overflow: hidden; white-space: nowrap; }
.snap .grip { margin-left: 12px; }
.snap-mode { flex: none; }
.snap-combo { width: 58px; }
.snap input[type="text"] { width: 58px; height: 20px; border: 1px solid var(--line); background: transparent; color: var(--line); text-align: center; }
.field { display: flex; align-items: center; gap: 6px; color: var(--line); margin-right: 20px; }
.turn { display: flex; align-items: center; gap: 4px; margin-right: 5px; }
.snap .angle { flex: none; }

.status { height: 22px; flex: none; display: flex; align-items: center; gap: 2px; background: linear-gradient(#fff, #f0ede1 30%, #efecdf); }
.cell { align-self: stretch; display: flex; align-items: center; border-right: 2px solid #d6d2c0; border-bottom: 1px solid #d6d2c0; padding: 2px 0 0 1px; white-space: nowrap; overflow: hidden; width: 78px; }
.cell.rest { flex: 1; border-right: 0; }
.base .cell:first-child { width: 143px; }
.taskbar { height: 5px; flex: none; display: flex; justify-content: space-between; background: linear-gradient(#1f57c8, #3f8cf3 60%, #2a66dc); }
.start { width: 88px; border: 0; border-radius: 0 4px 0 0; background: linear-gradient(#2b7f2b, #4aa64a); }
.tray { width: 27px; background: linear-gradient(#0d7be0, #19b9f3); }
.ime {
  position: absolute; left: 682px; right: 0; bottom: 5px; height: 38px; display: flex; gap: 25px; padding-left: 120px;
  font-size: 16px; line-height: 20px; color: #05619a; white-space: nowrap;
  background: linear-gradient(#f4faf8, #a4cac1 19px, #fff 19px, #fff 22px, #f4faf8 22px, #a4cac1);
}

.window { position: absolute; display: flex; flex-direction: column; background: var(--face); }
.poly { left: 681px; right: 0; top: 63px; bottom: 220px; border: solid #0a3cdc; border-width: 0 0 3px 3px; }
.poly .caption { height: 21px; flex: none; background: linear-gradient(#0b3fd0, #2a7cf8 2px, #0a5ae8 6px, #0867f5 17px, #0549d5); color: #fff; font-size: 13px; font-weight: bold; line-height: 21px; }
.poly .bar { height: 25px; padding-left: 3px; }
.radios { display: flex; background: var(--face); height: 23px; align-items: center; padding-right: 9px; }
.radios label { display: flex; align-items: center; gap: 9px; margin-right: 8px; }
.radios label:last-child { margin-right: 0; }
.radios input {
  appearance: none; width: 11px; height: 11px; border: 1px solid #8d8b80; border-radius: 50%; margin-left: 1px;
  background: #f7f6f0;
}
.radios input:checked { background: radial-gradient(circle, #000 0 2px, #f7f6f0 3px); }
.spin { display: flex; align-items: center; margin-right: 14px; white-space: pre; }
.num { position: relative; margin: 0 6px 0 9px; display: flex; }
.num input { width: 78px; height: 19px; border: 1px solid var(--line); background: #f1efe4; color: var(--line); text-align: right; padding: 0 18px 0 0; }
.num::before, .num::after { content: ""; position: absolute; right: 4px; border: 3px solid transparent; }
.num::before { top: 3px; border-bottom-color: var(--line); border-top: 0; }
.num::after { bottom: 3px; border-top-color: var(--line); border-bottom: 0; }
.view { flex: 1; min-height: 0; background: #000; overflow: hidden; display: flex; }
.hundred { font: 11px "DejaVu Sans Mono", monospace; fill: #c4c4c4; }
.dimension { font: bold 15px "DejaVu Sans Mono", monospace; fill: #0f0; }
.lower { height: 64px; flex: none; background: linear-gradient(var(--line), var(--line)) 0 22px / 100% 1px no-repeat; }
.poly .status { height: 21px; }
.coord { width: 149px; padding-left: 44px; }
.command { width: 148px; }

.props { left: 46px; top: 156px; bottom: 10px; width: 737px; max-width: calc(100% - 46px); border: solid #6d7cd9; border-width: 0 4px 3px; box-shadow: inset 0 0 0 1px #d8d4c6; }
.props .caption { height: 23px; flex: none; margin: 0 -4px; padding: 2px 5px 0 3px; display: flex; align-items: center; justify-content: space-between; background: linear-gradient(#5f7fdd, #8fb0ee 3px, #7b98e2 8px, #7f9fe8 18px, #6a7fd8); }
.props h1 { font-size: 13px; font-weight: bold; color: #d5e2fa; }
.close { width: 14px; height: 14px; border: 1px solid #e6d7e4; border-radius: 2px; background: #b5585f; color: #fff; font: bold 10px/11px "DejaVu Sans", sans-serif; }
.sheet { height: 251px; flex: none; display: flex; border: 1px solid var(--edge); border-width: 0 1px 1px; background: #fff; }
.table-box { flex: 1; min-width: 0; overflow: hidden; }
table { width: 100%; table-layout: fixed; border-collapse: separate; border-spacing: 0; }
.c-num { width: 21px; }
.c-name { width: 121px; }
.c-add { width: 31px; }
th, td { height: 19px; padding: 0 2px; border: solid #bdbdbd; border-width: 0 1px 1px 0; font-weight: normal; text-align: left; line-height: 16px; white-space: nowrap; }
thead th { height: 24px; padding: 0; text-align: center; background: linear-gradient(#fdfcfa, #ebe8da); }
thead .hot { background: linear-gradient(#f9d597, #f1be5e); color: #55103a; }
tbody th { text-align: center; padding: 0 2px 0 0; font: 11px/16px "Noto Sans", sans-serif; background: linear-gradient(90deg, #fdfcfa, #ebe8da); }
.name { padding-left: 19px; }
.key { color: #00f; }
.dim td { color: #808080; }
.current th { background: #ffd58c; color: #6a0f60; }
.current td { background: #dfe9f5; }
.current .name { background: var(--blue); color: #fff; }
.current .add { background: #fff; }
.add { padding: 0; text-align: center; }
.tick { appearance: none; width: 13px; height: 13px; border: 1px solid #1c5180; background: linear-gradient(135deg, #dcdcd7, #fff); display: block; margin: 0 auto; flex: none; }
.turn .tick { border-color: var(--line); width: 11px; height: 11px; margin: 0 0 0 4px; }
.plus { width: 13px; height: 13px; margin-right: 5px; border: 1px solid #aaa; background: #f4f4f4; color: #000; font: 13px/10px "DejaVu Sans Mono", monospace; vertical-align: middle; }
.rebar { width: 15px; height: 10px; vertical-align: -1px; }
.scroll { width: 18px; flex: none; display: flex; flex-direction: column; background: #f7f6f0; padding: 1px; }
.scroll button { height: 16px; flex: none; border: 1px solid #a9c0f4; border-radius: 2px; background: linear-gradient(#dbe6ff, #b8ccf8); display: flex; align-items: center; justify-content: center; }
.scroll svg { width: 9px; height: 6px; }
.thumb { height: 114px; border: 1px solid #98b0ea; border-radius: 2px; margin: 1px 0 auto; background: repeating-linear-gradient(#8ba8ea 0 1px, transparent 1px 3px) center 55px / 6px 9px no-repeat, linear-gradient(90deg, #cbdbff, #b9cefb); }
.tabs { height: 23px; flex: none; display: flex; align-items: flex-end; padding-left: 1px; border-bottom: 1px solid #919b9c; }
.tab { width: 46px; height: 17px; border: 1px solid #919b9c; border-bottom: 0; border-radius: 3px 3px 0 0; background: linear-gradient(#fff, #ece9d8); text-align: left; padding-left: 6px; line-height: 16px; }
.tab.active { width: 52px; height: 20px; margin-bottom: -1px; border-top: 2px solid #f0a020; background: #fcfcfa; line-height: 16px; }
.pane { flex: 1; min-height: 0; display: flex; flex-direction: column; padding: 3px 3px 0; border: 1px solid #b9b6a8; border-width: 0 1px; }
.rebars { height: 22px; padding-left: 3px; }
.rebars .tool { height: 18px; padding: 0 4px; }
.info { height: 26px; flex: none; display: flex; align-items: center; padding: 0 0 2px 3px; }
.info label { margin: 0 2px 0 5px; }
.steel { width: 135px; height: 21px; border: 1px solid var(--blue); }
.steel select { background: linear-gradient(#dfe3ea, #dfe3ea) right / 12px 100% no-repeat; }
.section { border: 2px solid #f00; }
.faint { font: 10px "DejaVu Sans", sans-serif; fill: #505050; }
.tiny { font: 7px "DejaVu Sans", "Noto Sans CJK SC", sans-serif; fill: #fff; }
.lime { fill: #0f0; }
.props .status { position: relative; height: 22px; margin-top: 5px; }
.props .cell { padding-top: 4px; }
.pos { width: 148px; padding-left: 9px; }
.size { position: absolute; right: 1px; bottom: 1px; width: 11px; height: 11px; background: radial-gradient(#b8b4a3 1px, transparent 1px) 0 0 / 4px 4px; }
.mark { position: absolute; left: -1px; top: 227px; width: 656px; height: 152px; pointer-events: none; }
```
